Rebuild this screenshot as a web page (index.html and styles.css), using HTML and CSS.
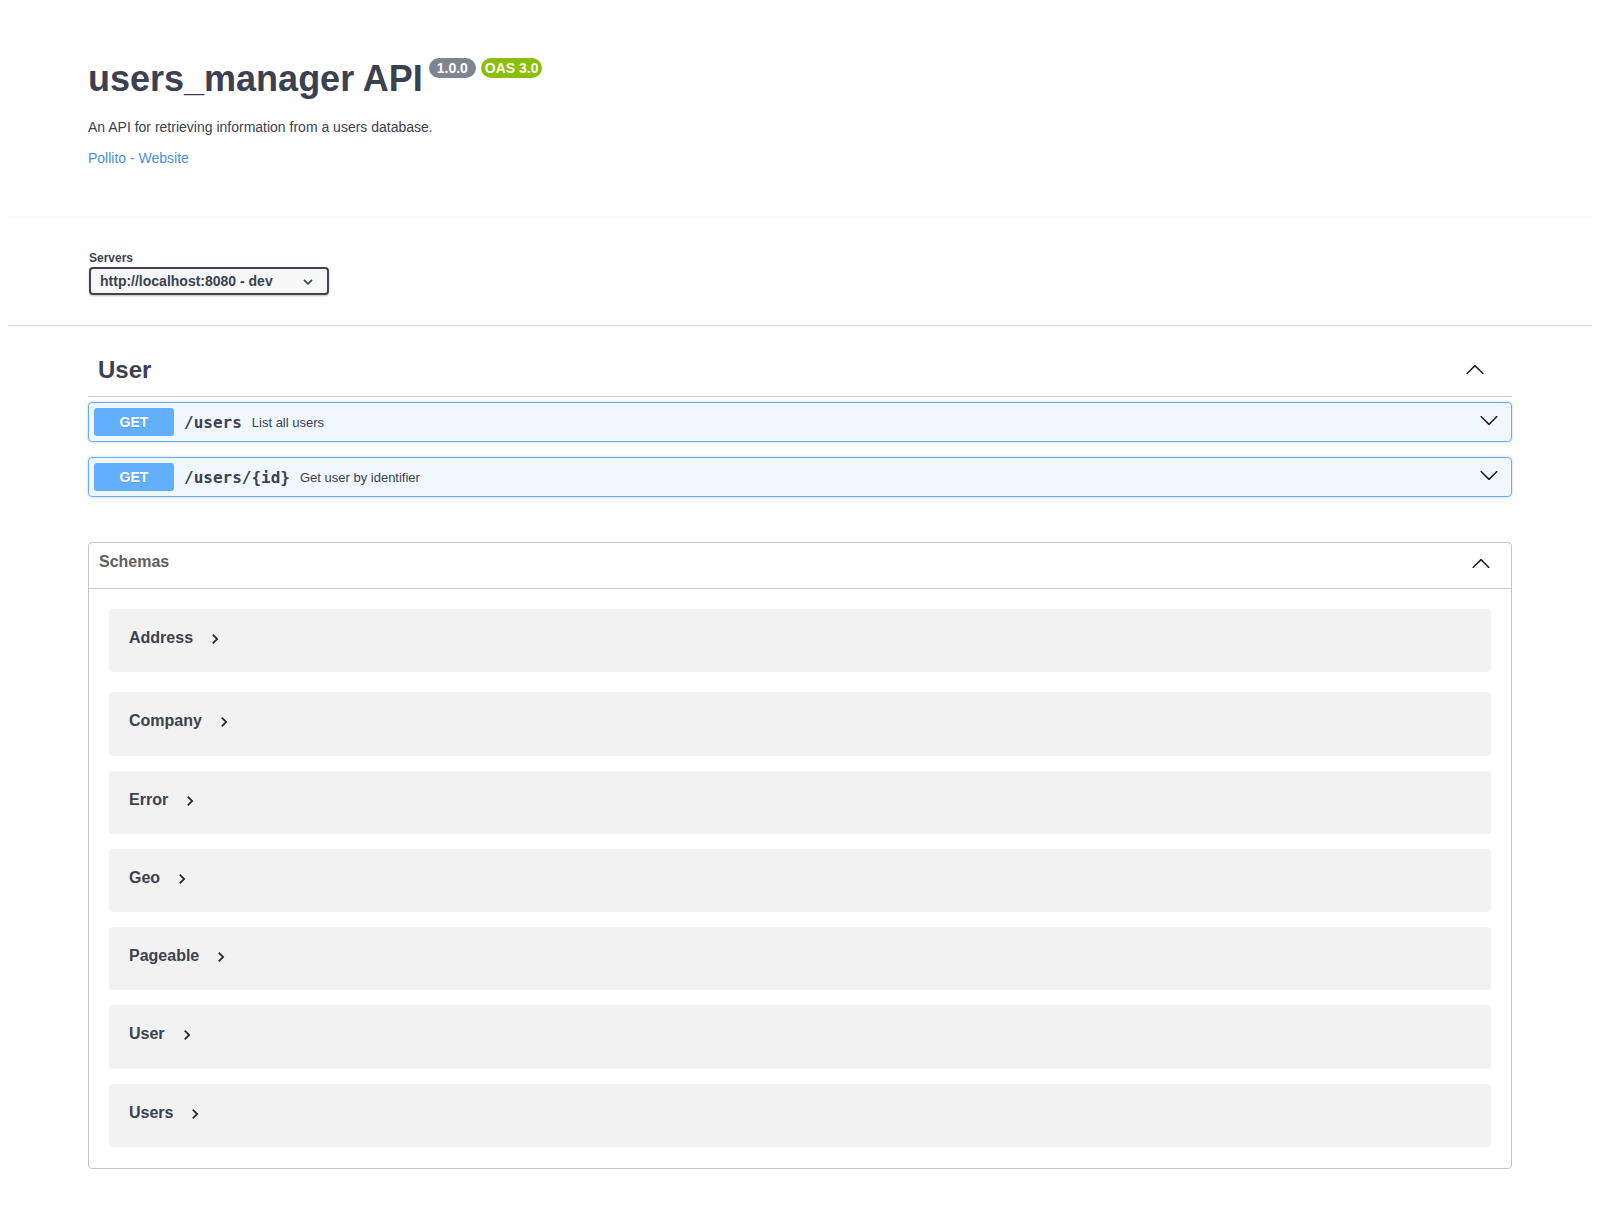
FILE: index.html
```html
<!DOCTYPE html>
<html lang="en">
<head>
<meta charset="utf-8">
<title>users_manager API</title>
<link rel="stylesheet" href="styles.css">
</head>
<body>
<div class="wrapper info">
  <h2 class="title"><span class="title-text">users_manager API</span><span class="badge badge-gray"> 1.0.0 </span><span class="badge badge-green">OAS 3.0</span></h2>
  <p class="desc">An API for retrieving information from a users database.</p>
  <a class="link" href="#">Pollito - Website</a>
</div>

<div class="scheme">
  <div class="wrapper">
    <div class="servers">
      <span class="servers-title">Servers</span>
      <div class="select">
        <span>http://localhost:8080 - dev</span>
        <svg class="select-arrow" width="10" height="6" viewBox="0 0 10 6"><polyline points="0.9,0.9 5,4.8 9.1,0.9" fill="none" stroke="#3b4151" stroke-width="1.6"/></svg>
      </div>
    </div>
  </div>
</div>

<div class="wrapper">
  <section class="tag-section">
    <h3 class="tag">
      <span>User</span>
      <svg class="arrow tag-arrow" width="20" height="20" viewBox="0 0 20 20"><path transform="rotate(180 10 10.5)" d="M17.418 6.109c.272-.268.709-.268.979 0s.271.701 0 .969l-7.908 7.83c-.27.268-.707.268-.979 0l-7.908-7.83c-.27-.268-.27-.701 0-.969.271-.268.709-.268.979 0L10 13.25l7.418-7.141z"/></svg>
    </h3>
    <div class="opblock">
      <span class="method">GET</span>
      <span class="path">/users</span>
      <span class="summary">List all users</span>
      <svg class="arrow op-arrow" width="20" height="20" viewBox="0 0 20 20"><path d="M17.418 6.109c.272-.268.709-.268.979 0s.271.701 0 .969l-7.908 7.83c-.27.268-.707.268-.979 0l-7.908-7.83c-.27-.268-.27-.701 0-.969.271-.268.709-.268.979 0L10 13.25l7.418-7.141z"/></svg>
    </div>
    <div class="opblock">
      <span class="method">GET</span>
      <span class="path">/users/{id}</span>
      <span class="summary">Get user by identifier</span>
      <svg class="arrow op-arrow" width="20" height="20" viewBox="0 0 20 20"><path d="M17.418 6.109c.272-.268.709-.268.979 0s.271.701 0 .969l-7.908 7.83c-.27.268-.707.268-.979 0l-7.908-7.83c-.27-.268-.27-.701 0-.969.271-.268.709-.268.979 0L10 13.25l7.418-7.141z"/></svg>
    </div>
  </section>

  <section class="models">
    <h4 class="models-head">
      <span>Schemas</span>
      <svg class="arrow models-arrow" width="20" height="20" viewBox="0 0 20 20"><path transform="rotate(180 10 10.5)" d="M17.418 6.109c.272-.268.709-.268.979 0s.271.701 0 .969l-7.908 7.83c-.27.268-.707.268-.979 0l-7.908-7.83c-.27-.268-.27-.701 0-.969.271-.268.709-.268.979 0L10 13.25l7.418-7.141z"/></svg>
    </h4>
    <div class="model first"><span class="model-title">Address</span><svg class="model-toggle" width="20" height="20" viewBox="0 0 24 24"><path d="M10 6L8.59 7.41 13.17 12l-4.58 4.59L10 18l6-6z"/></svg></div>
    <div class="model"><span class="model-title">Company</span><svg class="model-toggle" width="20" height="20" viewBox="0 0 24 24"><path d="M10 6L8.59 7.41 13.17 12l-4.58 4.59L10 18l6-6z"/></svg></div>
    <div class="model"><span class="model-title">Error</span><svg class="model-toggle" width="20" height="20" viewBox="0 0 24 24"><path d="M10 6L8.59 7.41 13.17 12l-4.58 4.59L10 18l6-6z"/></svg></div>
    <div class="model"><span class="model-title">Geo</span><svg class="model-toggle" width="20" height="20" viewBox="0 0 24 24"><path d="M10 6L8.59 7.41 13.17 12l-4.58 4.59L10 18l6-6z"/></svg></div>
    <div class="model"><span class="model-title">Pageable</span><svg class="model-toggle" width="20" height="20" viewBox="0 0 24 24"><path d="M10 6L8.59 7.41 13.17 12l-4.58 4.59L10 18l6-6z"/></svg></div>
    <div class="model"><span class="model-title">User</span><svg class="model-toggle" width="20" height="20" viewBox="0 0 24 24"><path d="M10 6L8.59 7.41 13.17 12l-4.58 4.59L10 18l6-6z"/></svg></div>
    <div class="model"><span class="model-title">Users</span><svg class="model-toggle" width="20" height="20" viewBox="0 0 24 24"><path d="M10 6L8.59 7.41 13.17 12l-4.58 4.59L10 18l6-6z"/></svg></div>
  </section>
</div>
</body>
</html>
```

FILE: styles.css
```css
* { box-sizing: border-box; }

html, body {
  background: #fff;
}

body {
  margin: 8px;
  font-family: "Liberation Sans", Arial, sans-serif;
  color: #3b4151;
}

.wrapper {
  max-width: 1460px;
  margin: 0 auto;
  padding: 0 18px;
}

/* Info */
.info {
  margin-top: 50px;
  margin-bottom: 51px;
}

.title {
  display: flex;
  align-items: flex-start;
  margin: 0 0 20px;
  font-size: 36px;
  line-height: 41px;
  font-weight: 700;
  color: #3b4151;
}

.badge {
  display: inline-block;
  padding: 2px 4px;
  border-radius: 57px;
  font-size: 14px;
  line-height: 16px;
  font-weight: 700;
  color: #fff;
  white-space: pre;
}

.badge-gray { background: #7d8492; margin-left: 6px; }
.badge-green { background: #89bf04; margin-left: 5px; }

.desc {
  margin: 0 0 15px;
  font-size: 14px;
  line-height: 16px;
  color: #3b4151;
}

.link {
  display: block;
  font-size: 14px;
  line-height: 16px;
  color: #4990e2;
  text-decoration: none;
}

/* Servers */
.scheme {
  margin: 0 0 20px;
  padding: 34px 0 30px;
  background: #fff;
  box-shadow: 0 0 2px 0 rgba(0, 0, 0, .06), 0 1px 2px 0 rgba(0, 0, 0, .15);
}

.servers {
  display: flex;
  flex-direction: column;
  align-items: flex-start;
  gap: 2px;
  padding-left: 1px;
}

.servers-title {
  font-size: 12px;
  line-height: 14px;
  font-weight: 700;
  color: #3b4151;
}

.select {
  width: 240px;
  height: 28px;
  display: flex;
  align-items: center;
  justify-content: space-between;
  padding: 0 14px 0 9px;
  background: #f7f7f7;
  border: 2px solid #41444e;
  border-radius: 4px;
  box-shadow: 0 1px 2px 0 rgba(0, 0, 0, .25);
  font-size: 14px;
  line-height: 16px;
  font-weight: 700;
  color: #3b4151;
}

.select-arrow { display: block; margin-top: 1px; }

/* Tag */
.tag-section {
  display: flex;
  flex-direction: column;
}

.tag {
  display: flex;
  align-items: center;
  margin: 0 0 5px;
  padding: 10px 20px 11px 10px;
  border-bottom: 1px solid rgba(59, 65, 81, .3);
  font-size: 24px;
  line-height: 30px;
  font-weight: 700;
  color: #3b4151;
}

.arrow { display: block; fill: #1a1a1a; flex: none; }

.tag-arrow { margin-left: auto; margin-right: 7px; margin-bottom: 3px; }

.opblock {
  display: flex;
  align-items: center;
  margin: 0 0 15px;
  padding: 5px;
  background: rgba(97, 175, 254, .1);
  border: 1px solid #61affe;
  border-radius: 4px;
  box-shadow: 0 0 3px rgba(0, 0, 0, .19);
}

.method {
  min-width: 80px;
  padding: 5px 0;
  background: #61affe;
  border-radius: 3px;
  color: #fff;
  font-size: 14px;
  line-height: 18px;
  font-weight: 700;
  text-align: center;
  text-shadow: 0 1px 0 rgba(0, 0, 0, .1);
}

.path {
  padding: 0 10px;
  font-family: "DejaVu Sans Mono", "Liberation Mono", monospace;
  font-size: 16px;
  font-weight: 600;
  color: #3b4151;
}

.summary {
  font-size: 13px;
  color: #3b4151;
}

.op-arrow { margin-left: auto; margin-right: 7px; margin-bottom: 4px; }

/* Models */
.models {
  margin: 30px 0;
  padding-bottom: 6px;
  border: 1px solid rgba(59, 65, 81, .3);
  border-radius: 4px;
}

.models-head {
  display: flex;
  align-items: flex-start;
  margin: 0;
  padding: 10px 20px 15px 10px;
  border-bottom: 1px solid rgba(59, 65, 81, .3);
  font-size: 16px;
  line-height: 18px;
  font-weight: 700;
  color: #606060;
}

.models-arrow { margin-left: auto; }

.model {
  display: flex;
  align-items: flex-start;
  height: 63.3px;
  margin: 0 20px 15px;
  padding: 20px 20px 0;
  background: rgba(0, 0, 0, .05);
  border-radius: 4px;
}

.model.first { margin: 20px; }

.model-title {
  font-size: 16px;
  line-height: 18px;
  font-weight: 700;
  color: #3b4151;
}

.model-toggle {
  display: block;
  flex: none;
  margin-left: 12px;
  margin-top: 0;
  fill: #222;
}
```
